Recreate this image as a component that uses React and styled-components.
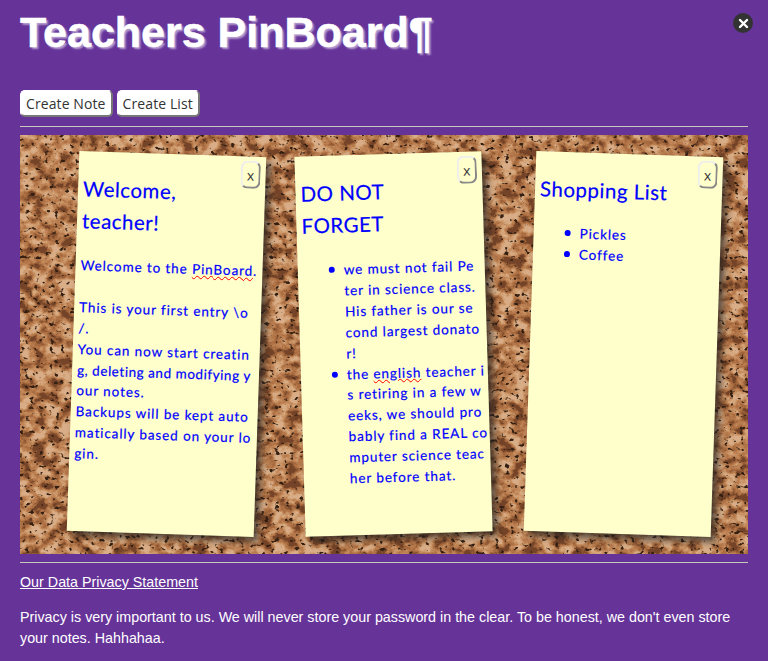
import React from "react";
import styled, { createGlobalStyle } from "styled-components";

const GlobalStyle = createGlobalStyle`
  html, body {
    margin: 0;
    background: #663399;
    height: 661px;
    overflow: hidden;
  }
  body {
    font-family: "Liberation Sans", Arial, sans-serif;
    color: #ffffff;
  }
`;

const Page = styled.div`
  padding: 0 20px;
  position: relative;
`;

const Title = styled.h1`
  margin: 0;
  padding-top: 7px;
  height: 83px;
  box-sizing: border-box;
  font-size: 43px;
  line-height: 50px;
  font-weight: 700;
  color: #fff;
  -webkit-text-stroke: 0.5px #fff;
  text-shadow: 2px 2px 2px rgba(255, 255, 255, 0.55);
`;

const CloseDialog = styled.span`
  position: absolute;
  top: 13px;
  right: 15px;
  width: 20px;
  height: 20px;
  border-radius: 50%;
  background: #333;
  display: flex;
  align-items: center;
  justify-content: center;
`;

const Toolbar = styled.div`
  display: flex;
  gap: 4px;
  padding-top: 7px;
  height: 36px;
`;

const ToolButton = styled.button`
  height: 27px;
  padding: 0 5px;
  border: 1px solid #fff;
  border-right: 2px solid #777;
  border-bottom: 2px solid #777;
  border-radius: 5px;
  background: #fff;
  color: #333;
  font-family: "Open Sans", sans-serif;
  font-size: 14px;
  letter-spacing: 0.1px;
`;

const Rule = styled.hr`
  margin: 0;
  height: 1px;
  border: 0;
  background: #c9c9bd;
`;

const Board = styled.div`
  position: relative;
  margin-top: 8px;
  height: 419px;
  overflow: hidden;
  background: #b98558;
  display: flex;
  gap: 40px;
  padding: 19px 28px 20px 53px;
  box-sizing: border-box;
`;

const CorkArt = styled.svg`
  position: absolute;
  inset: 0;
  width: 100%;
  height: 100%;
`;

const Note = styled.article`
  position: relative;
  flex: 0 0 187px;
  min-width: 0;
  height: 380px;
  margin-left: ${(p) => p.$nudge || 0}px;
  box-sizing: border-box;
  padding: 21px 5px 0;
  background: #ffffcc;
  color: #0000ff;
  box-shadow: 5px 5px 7px rgba(33, 33, 33, 0.7);
  transform: rotate(${(p) => p.$tilt}deg);
  font-family: "Lato", sans-serif;
  -webkit-text-stroke: 0.2px #0000ff;
`;

const NoteClose = styled.button`
  position: absolute;
  top: 4px;
  right: 5px;
  width: 20px;
  height: 28px;
  padding: 0;
  background: transparent;
  border: 2px solid #eee;
  border-right-color: #888;
  border-bottom-color: #888;
  border-radius: 7px;
  color: #333;
  font-family: "Open Sans", sans-serif;
  font-size: 14px;
  -webkit-text-stroke: 0;
`;

const NoteTitle = styled.h2`
  margin: 0 0 ${(p) => p.$after}px;
  padding-right: 20px;
  font-size: 20.5px;
  line-height: 32px;
  font-weight: 400;
  letter-spacing: 0.5px;
`;

const NoteLine = styled.span`
  display: block;
  white-space: nowrap;
  font-size: 13.5px;
  line-height: 20.9px;
  letter-spacing: ${(p) => (p.$tight ? "0.55px" : "0.9px")};
  min-height: 20.9px;
`;

const NoteList = styled.ul`
  margin: 0;
  padding-left: 41px;
  list-style: none;
`;

const NoteItem = styled.li`
  position: relative;

  &::before {
    content: "";
    position: absolute;
    left: -15px;
    top: 7px;
    width: 6px;
    height: 6px;
    border-radius: 50%;
    background: #0000ff;
  }
`;

const Misspelt = styled.span`
  text-decoration: underline wavy #ff0000 1px;
`;

const Footer = styled.div`
  margin-top: 8px;
  border-top: 1px solid #c9c9bd;
  padding-top: 9px;
  font-size: 14.3px;
  line-height: 21px;
`;

const PrivacyLink = styled.a`
  color: #fff;
  text-decoration: underline;
`;

const PrivacyText = styled.p`
  margin: 14px 0 0;
`;

const Cork = () => (
  <CorkArt aria-hidden="true">
    <filter id="corkFlakes" x="0" y="0" width="100%" height="100%" colorInterpolationFilters="sRGB">
      <feTurbulence type="fractalNoise" baseFrequency="0.075 0.09" numOctaves="5" seed="7" />
      <feColorMatrix
        type="matrix"
        values="2.8 0 0 0 -0.9  2.8 0 0 0 -0.9  2.8 0 0 0 -0.9  0 0 0 0 1"
      />
      <feComponentTransfer result="plates">
        <feFuncR type="table" tableValues="0.46 0.58 0.66 0.71 0.75 0.79 0.83 0.85" />
        <feFuncG type="table" tableValues="0.27 0.36 0.42 0.47 0.52 0.58 0.64 0.68" />
        <feFuncB type="table" tableValues="0.16 0.21 0.25 0.29 0.34 0.4 0.47 0.53" />
      </feComponentTransfer>
      <feTurbulence type="fractalNoise" baseFrequency="0.2 0.24" numOctaves="2" seed="23" />
      <feColorMatrix
        type="matrix"
        values="0 0 0 0 0.2  0 0 0 0 0.12  0 0 0 0 0.07  8 0 0 0 -5"
        result="specks"
      />
      <feMerge>
        <feMergeNode in="plates" />
        <feMergeNode in="specks" />
      </feMerge>
    </filter>
    <rect width="100%" height="100%" filter="url(#corkFlakes)" />
  </CorkArt>
);

const StickyNote = ({ tilt, nudge, after, title, children }) => (
  <Note $tilt={tilt} $nudge={nudge}>
    <NoteClose>x</NoteClose>
    <NoteTitle $after={after}>{title}</NoteTitle>
    {children}
  </Note>
);

export default function App() {
  return (
    <Page>
      <GlobalStyle />
      <Title>Teachers PinBoard¶</Title>
      <CloseDialog>
        <svg width="11" height="11" viewBox="0 0 11 11">
          <path d="M2 2l7 7M9 2l-7 7" stroke="#fff" strokeWidth="2.4" strokeLinecap="round" />
        </svg>
      </CloseDialog>
      <Toolbar>
        <ToolButton>Create Note</ToolButton>
        <ToolButton>Create List</ToolButton>
      </Toolbar>
      <Rule />
      <Board>
        <Cork />
        <StickyNote
          tilt={1.9}
          after={19}
          title={
            <>
              Welcome,
              <br />
              teacher!
            </>
          }
        >
          <NoteLine>
            Welcome to the <Misspelt>PinBoard</Misspelt>.
          </NoteLine>
          <NoteLine />
          <NoteLine>This is your first entry \o</NoteLine>
          <NoteLine>/.</NoteLine>
          <NoteLine>You can now start creatin</NoteLine>
          <NoteLine $tight>g, deleting and modifying y</NoteLine>
          <NoteLine>our notes.</NoteLine>
          <NoteLine>Backups will be kept auto</NoteLine>
          <NoteLine>matically based on your lo</NoteLine>
          <NoteLine>gin.</NoteLine>
        </StickyNote>
        <StickyNote
          tilt={-1.7}
          after={19}
          title={
            <>
              DO NOT
              <br />
              FORGET
            </>
          }
        >
          <NoteList>
            <NoteItem>
              <NoteLine>we must not fail Pe</NoteLine>
              <NoteLine>ter in science class.</NoteLine>
              <NoteLine>His father is our se</NoteLine>
              <NoteLine>cond largest donato</NoteLine>
              <NoteLine>r!</NoteLine>
            </NoteItem>
            <NoteItem>
              <NoteLine>
                the <Misspelt>english</Misspelt> teacher i
              </NoteLine>
              <NoteLine>s retiring in a few w</NoteLine>
              <NoteLine>eeks, we should pro</NoteLine>
              <NoteLine>bably find a REAL co</NoteLine>
              <NoteLine>mputer science teac</NoteLine>
              <NoteLine>her before that.</NoteLine>
            </NoteItem>
          </NoteList>
        </StickyNote>
        <StickyNote tilt={1.9} nudge={3} after={18} title="Shopping List">
          <NoteList>
            <NoteItem>
              <NoteLine>Pickles</NoteLine>
            </NoteItem>
            <NoteItem>
              <NoteLine>Coffee</NoteLine>
            </NoteItem>
          </NoteList>
        </StickyNote>
      </Board>
      <Footer>
        <PrivacyLink href="#">Our Data Privacy Statement</PrivacyLink>
        <PrivacyText>
          Privacy is very important to us. We will never store your password in the clear. To be
          honest, we don't even store your notes. Hahhahaa.
        </PrivacyText>
      </Footer>
    </Page>
  );
}
